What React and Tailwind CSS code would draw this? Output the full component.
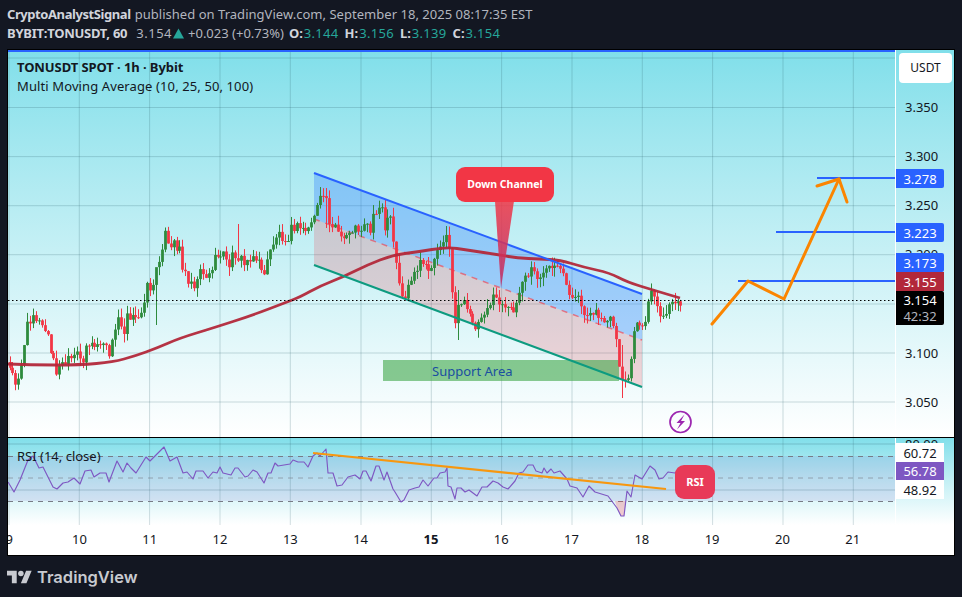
import React from "react";

const KEYS = [[8,362],[15,382],[18,377],[23,357],[28,323],[33,312],[42,327],[48,333],[52,357],[57,372],[62,365],[72,360],[78,355],[82,363],[87,343],[95,347],[100,343],[110,353],[115,333],[119,315],[125,332],[127,310],[137,323],[142,308],[147,287],[153,287],[157,270],[160,255],[165,233],[170,253],[175,243],[180,247],[183,272],[192,282],[197,283],[200,265],[208,280],[213,265],[222,250],[228,267],[235,252],[245,265],[252,253],[258,262],[265,273],[272,245],[278,233],[287,238],[293,227],[300,228],[308,230],[315,213],[320,203],[325,190],[330,222],[337,228],[342,243],[350,230],[362,228],[365,220],[370,233],[375,208],[382,208],[385,232],[390,215],[393,240],[400,288],[405,300],[410,280],[417,275],[422,260],[428,273],[435,257],[442,240],[447,233],[450,257],[455,323],[460,298],[467,310],[477,327],[482,313],[490,303],[497,298],[507,313],[517,303],[522,283],[532,270],[538,277],[547,273],[553,270],[562,273],[567,285],[573,300],[582,302],[585,318],[590,307],[602,320],[612,322],[617,347],[620,370],[623,385],[628,383],[633,347],[637,320],[640,322],[643,332],[647,308],[652,292],[655,298],[660,323],[667,312],[670,305],[675,308],[680,300]];
const MA = [[8,364],[30,365],[80,365],[113,362],[135,356],[157,348],[180,338],[213,328],[253,315],[287,302],[300,297],[320,286],[343,277],[367,265],[393,255],[417,252],[447,247],[467,250],[500,255],[517,258],[540,259],[560,260],[583,267],[610,273],[627,282],[653,290],[680,298]];
const RSI = [[8,482],[14,492],[20,480],[28,460],[33,456],[39,468],[43,467],[48,477],[53,487],[57,489],[63,483],[68,482],[74,478],[80,484],[85,471],[91,470],[94,477],[100,473],[106,473],[109,482],[117,461],[123,472],[127,463],[131,468],[136,473],[146,457],[150,461],[157,454],[164,447],[170,461],[177,457],[183,473],[187,472],[193,479],[196,471],[203,471],[208,478],[213,472],[217,473],[220,467],[223,473],[231,475],[235,468],[238,468],[245,477],[248,476],[253,470],[257,472],[264,483],[268,473],[271,473],[275,463],[278,466],[290,464],[293,460],[298,462],[304,462],[308,467],[313,456],[317,453],[320,456],[326,449],[328,473],[333,473],[337,486],[342,485],[348,477],[355,475],[360,479],[363,471],[366,471],[371,481],[376,466],[379,466],[384,480],[387,472],[393,489],[395,492],[401,502],[404,500],[409,490],[415,488],[419,487],[423,480],[428,486],[434,478],[437,478],[440,473],[445,472],[447,468],[448,486],[451,487],[455,499],[457,488],[461,488],[465,492],[469,490],[477,496],[482,487],[487,487],[493,481],[498,483],[503,487],[508,489],[515,481],[519,473],[523,472],[528,465],[533,465],[536,471],[542,473],[544,468],[547,473],[551,469],[554,473],[560,471],[567,479],[570,486],[577,488],[583,497],[589,486],[595,492],[608,496],[617,508],[621,516],[624,516],[627,491],[631,497],[635,475],[642,479],[650,466],[655,470],[659,479],[663,478],[668,472],[675,473],[680,469]];
const WICKS = [[157,268,325],[238,224,262],[255,232,265],[622,345,398],[459,290,340],[489,296,322],[653,285,318],[120,304,335],[326,188,228],[167,226,250],[375,198,235],[448,228,262]];

const pts = (a) => a.map((p) => p.join(",")).join(" ");

function smooth(a) {
  let d = `M${a[0][0]} ${a[0][1]}`;
  for (let i = 1; i < a.length - 1; i++) {
    const mx = (a[i][0] + a[i + 1][0]) / 2;
    const my = (a[i][1] + a[i + 1][1]) / 2;
    d += ` Q${a[i][0]} ${a[i][1]} ${mx} ${my}`;
  }
  const l = a[a.length - 1];
  return `${d} L${l[0]} ${l[1]}`;
}

function interp(x) {
  for (let i = 1; i < KEYS.length; i++) {
    if (x <= KEYS[i][0]) {
      const [x0, y0] = KEYS[i - 1];
      const [x1, y1] = KEYS[i];
      return y0 + ((y1 - y0) * (x - x0)) / (x1 - x0);
    }
  }
  return KEYS[KEYS.length - 1][1];
}

function rnd(i) {
  const s = Math.sin(i * 12.9898 + 4.1) * 43758.5453;
  return s - Math.floor(s);
}

function buildCandles() {
  const out = [];
  let prev = interp(8);
  for (let i = 0; i < 230; i++) {
    const x = Math.round(9.5 + 2.93 * i) + 0.5;
    const close = interp(x) + (rnd(i) - 0.5) * 12;
    const top = Math.min(prev, close);
    const bot = Math.max(prev, close);
    let wt = top - rnd(i + 300) * 9;
    let wb = bot + rnd(i + 600) * 9;
    WICKS.forEach((w) => {
      if (Math.abs(w[0] - x) < 1.5) {
        wt = w[1];
        wb = w[2];
      }
    });
    out.push({ x, top, h: Math.max(1, bot - top), wt, wb, up: close < prev });
    prev = close;
  }
  return out;
}

const CANDLES = buildCandles();
const VERT = [9, 79.3, 149.6, 220, 290.3, 361, 431.3, 501.6, 572, 642.3, 712.6, 783, 853.3];
const HOR = [58, 107.5, 156.6, 205.7, 254.7, 304, 353, 402];
const DAYS = ["9", "10", "11", "12", "13", "14", "15", "16", "17", "18", "19", "20", "21"];

function PriceChart() {
  return (
    <svg className="absolute inset-0" width="887" height="387" viewBox="8 50 887 387">
      <defs>
        <linearGradient id="tri" x1="0" y1="0" x2="0" y2="1">
          <stop offset="0" stopColor="#f23645" />
          <stop offset="1" stopColor="#bd2c66" />
        </linearGradient>
      </defs>
      {HOR.map((y) => (
        <line key={y} x1="8" x2="895" y1={y} y2={y} stroke="#2a5a6a" strokeOpacity="0.22" />
      ))}
      {VERT.map((x) => (
        <line key={x} x1={x} x2={x} y1="50" y2="437" stroke="#2a5a6a" strokeOpacity="0.22" />
      ))}
      <polygon points="314,173 642,294 642,340 314,219" fill="#2f7dff" fillOpacity="0.33" />
      <polygon points="314,219 642,340 642,387 314,265" fill="#f23645" fillOpacity="0.2" />
      <rect x="383" y="360" width="236" height="21" fill="#3fa648" fillOpacity="0.6" />
      <line x1="314" y1="219" x2="642" y2="340" stroke="#f23645" strokeOpacity="0.6" strokeWidth="1.5" strokeDasharray="6 6" />
      {CANDLES.map((c, i) => (
        <g key={i} fill={c.up ? "#2e8b3d" : "#f23645"}>
          <rect x={c.x - 0.5} y={c.wt} width="1" height={c.wb - c.wt} />
          <rect x={c.x - 1.4} y={c.top} width="2.8" height={c.h} />
        </g>
      ))}
      <path d={smooth(MA)} fill="none" stroke="#b2283a" strokeWidth="2.8" strokeOpacity="0.95" strokeLinejoin="round" />
      <line x1="314" y1="173" x2="642" y2="294" stroke="#2962ff" strokeWidth="2" />
      <line x1="314" y1="265" x2="642" y2="387" stroke="#0d9b80" strokeWidth="2" />
      <polygon points="495,201 514,201 501,288" fill="url(#tri)" fillOpacity="0.85" />
      <line x1="8" x2="895" y1="300.5" y2="300.5" stroke="#000" strokeDasharray="1.5 2.5" />
      <line x1="817" x2="895" y1="178" y2="178" stroke="#2962ff" strokeWidth="2" />
      <line x1="776" x2="895" y1="232" y2="232" stroke="#2962ff" strokeWidth="2" />
      <line x1="738" x2="895" y1="281" y2="281" stroke="#2962ff" strokeWidth="2" />
      <polyline points="712,324 748,281 784,299 839,179" fill="none" stroke="#fb8500" strokeWidth="3" strokeLinecap="round" strokeLinejoin="round" />
      <polyline points="817,186 839,179 847,202" fill="none" stroke="#fb8500" strokeWidth="3" strokeLinecap="round" strokeLinejoin="round" />
      <circle cx="680.5" cy="422" r="10.5" fill="none" stroke="#9c27b0" strokeWidth="1.7" />
      <path d="M684.5 414.5 L676.5 423 L680.5 423 L677 429.5 L685 421 L681 421 Z" fill="#9c27b0" />
    </svg>
  );
}

function RsiChart() {
  return (
    <svg className="absolute inset-0" width="887" height="87" viewBox="8 438 887 87">
      <rect x="8" y="456" width="887" height="45" fill="#7e57c2" fillOpacity="0.13" />
      {[444, 490].map((y) => (
        <line key={y} x1="8" x2="895" y1={y} y2={y} stroke="#2a5a6a" strokeOpacity="0.25" />
      ))}
      {VERT.map((x) => (
        <line key={x} x1={x} x2={x} y1="438" y2="525" stroke="#2a5a6a" strokeOpacity="0.2" />
      ))}
      <line x1="8" x2="895" y1="456.5" y2="456.5" stroke="#787b86" strokeDasharray="5 5" />
      <line x1="8" x2="895" y1="478" y2="478" stroke="#787b86" strokeOpacity="0.6" strokeDasharray="5 5" />
      <line x1="8" x2="895" y1="501.5" y2="501.5" stroke="#787b86" strokeDasharray="5 5" />
      <polygon points="615,501 617,508 621,516 624,516 626,501" fill="#f23645" fillOpacity="0.25" />
      <polyline points={pts(RSI)} fill="none" stroke="#7e57c2" strokeWidth="1.15" strokeLinejoin="round" />
      <line x1="313" y1="453" x2="666" y2="489" stroke="#f7970f" strokeWidth="2.2" />
    </svg>
  );
}

function AxisLabel({ top, className, children }) {
  return (
    <div
      className={`absolute left-0 w-[48px] flex flex-col items-center justify-center leading-[16px] text-[13px] ${className}`}
      style={{ top: top[0], height: top[1] }}
    >
      {children}
    </div>
  );
}

export default function App() {
  return (
    <div className="w-[962px] h-[597px] bg-[#131722] overflow-hidden flex flex-col font-['Noto_Sans',sans-serif]">
      <header className="h-[49px] shrink-0 pl-[7px] pt-[5px] text-[13px] leading-[19px] text-[#b2b5be]">
        <div className="whitespace-nowrap">
          <span className="font-bold text-[#d1d4dc] tracking-[-0.42px]">CryptoAnalystSignal</span>
          <span className="ml-[4px] tracking-[0.03px]">published on TradingView.com, September 18, 2025 08:17:35 EST</span>
        </div>
        <div className="whitespace-nowrap flex items-center">
          <span className="font-bold text-[#d1d4dc] tracking-[-0.25px]">BYBIT:TONUSDT, 60</span>
          <span className="ml-[9px] tracking-[0.5px]">3.154</span>
          <svg width="11" height="11" viewBox="0 0 11 11" className="ml-[1px]">
            <polygon points="5.5,0.5 11,10.5 0,10.5" fill="#26a69a" />
          </svg>
          <span className="ml-[4px]">+0.023 (+0.73%)</span>
          <span className="ml-[5px] font-bold text-[#d1d4dc]">O:</span>
          <span className="ml-[1px] text-[#26a69a] tracking-[0.3px]">3.144</span>
          <span className="ml-[6px] font-bold text-[#d1d4dc]">H:</span>
          <span className="ml-[1px] text-[#26a69a] tracking-[0.3px]">3.156</span>
          <span className="ml-[6px] font-bold text-[#d1d4dc]">L:</span>
          <span className="ml-[1px] text-[#26a69a] tracking-[0.3px]">3.139</span>
          <span className="ml-[6px] font-bold text-[#d1d4dc]">C:</span>
          <span className="ml-[1px] text-[#26a69a] tracking-[0.3px]">3.154</span>
        </div>
      </header>

      <main className="ml-[7px] w-[948px] h-[507px] shrink-0 border border-black flex flex-col bg-white text-[#131722]">
        <section className="h-[388px] shrink-0 flex border-b border-black bg-gradient-to-b from-[#80dfea] to-white">
          <div className="relative w-[887px] h-[387px] overflow-hidden">
            <PriceChart />
            <div className="absolute left-0 right-0 top-0 h-[2px] bg-[#2962ff]" />
            <div className="absolute left-[9px] top-[8px] text-[13px] leading-[19px] text-[#131722]">
              <div className="font-bold tracking-[-0.08px]">TONUSDT SPOT · 1h · Bybit</div>
              <div className="tracking-[0.11px]">Multi Moving Average (10, 25, 50, 100)</div>
            </div>
            <div className="absolute left-[448px] top-[117px] w-[98px] h-[35px] rounded-[9px] bg-[#f23645] text-white text-[10.5px] font-bold flex items-center justify-center">
              Down Channel
            </div>
            <div className="absolute left-[375px] top-[311px] w-[236px] h-[21px] flex items-center pl-[49px] text-[13px] text-[#1a4fa0]">
              Support Area
            </div>
          </div>
          <div className="relative w-[59px] border-l border-white text-[13px] text-[#131722]">
            <div className="absolute left-[3px] top-[3px] w-[53px] h-[30px] rounded-[4px] bg-white flex items-center justify-center text-[12px]">
              USDT
            </div>
            <div className="absolute left-[9px] top-[48px] leading-[18px]">3.350</div>
            <div className="absolute left-[9px] top-[97px] leading-[18px]">3.300</div>
            <div className="absolute left-[9px] top-[146px] leading-[18px]">3.250</div>
            <div className="absolute left-[9px] top-[195px] leading-[18px]">3.200</div>
            <div className="absolute left-[9px] top-[343px] leading-[18px]">3.050</div>
            <div className="absolute left-[9px] top-[294px] leading-[18px]">3.100</div>
            <AxisLabel top={[119, 19]} className="rounded-r-[2px] bg-[#2962ff] text-white">3.278</AxisLabel>
            <AxisLabel top={[173, 19]} className="rounded-r-[2px] bg-[#2962ff] text-white">3.223</AxisLabel>
            <AxisLabel top={[203, 19]} className="rounded-r-[2px] bg-[#2962ff] text-white">3.173</AxisLabel>
            <AxisLabel top={[222, 19]} className="bg-[#b2283a] text-white">3.155</AxisLabel>
            <AxisLabel top={[241, 34]} className="rounded-r-[2px] bg-black text-white">
              <span>3.154</span>
              <span className="text-[#b2b5be]">42:32</span>
            </AxisLabel>
          </div>
        </section>

        <section className="h-[87px] shrink-0 flex bg-gradient-to-b from-[#80dfea] to-white">
          <div className="relative w-[887px] h-[87px] overflow-hidden">
            <RsiChart />
            <div className="absolute left-[9px] top-[9px] text-[13px] leading-[19px]">RSI (14, close)</div>
            <div className="absolute left-[667px] top-[27px] w-[40px] h-[34px] rounded-[9px] bg-[#e83a58] text-white text-[11px] font-bold flex items-center justify-center">
              RSI
            </div>
          </div>
          <div className="relative w-[59px] border-l border-white text-[13px] overflow-hidden">
            <div className="absolute left-[9px] top-[-3px] leading-[18px]">80.00</div>
            <AxisLabel top={[5, 19]} className="bg-white">60.72</AxisLabel>
            <AxisLabel top={[24, 18]} className="bg-[#7e57c2] text-white">56.78</AxisLabel>
            <AxisLabel top={[42, 19]} className="bg-white">48.92</AxisLabel>
          </div>
        </section>

        <section className="h-[30px] shrink-0 overflow-hidden flex items-center bg-white">
          <div className="flex ml-[-34px] text-[13px]">
            {DAYS.map((d) => (
              <div key={d} className={`w-[70.3px] shrink-0 text-center ${d === "15" ? "font-bold" : ""}`}>
                {d}
              </div>
            ))}
          </div>
        </section>
      </main>

      <footer className="flex-1 flex items-start pl-[7px] pt-[12px] gap-[5px] text-[#c8cad0]">
        <svg width="25" height="14" viewBox="0 4 36 18" className="mt-[2px]" fill="currentColor">
          <path d="M14 22H7V11H0V4h14v18zM28 22h-8l7.5-18h8L28 22z" />
          <circle cx="20" cy="8" r="4" />
        </svg>
        <span className="text-[16.5px] leading-[18px] font-semibold font-['Inter',sans-serif]">TradingView</span>
      </footer>
    </div>
  );
}
